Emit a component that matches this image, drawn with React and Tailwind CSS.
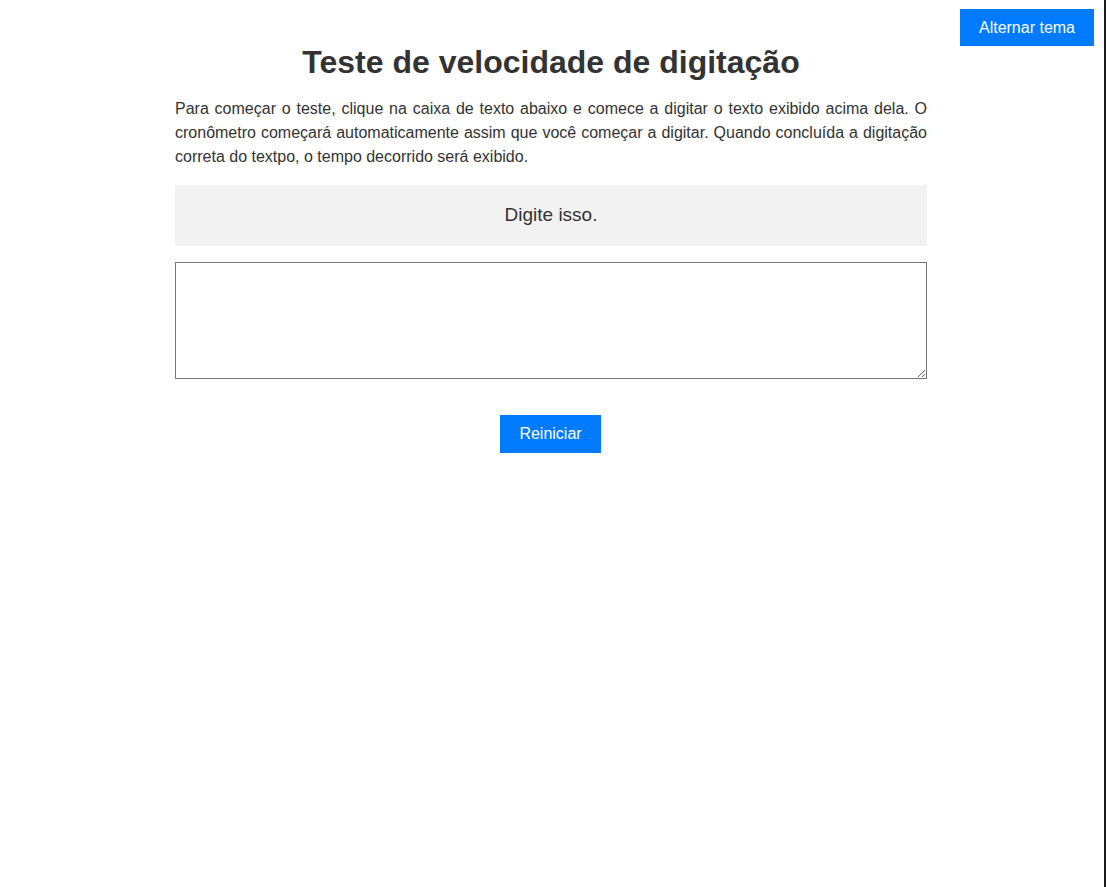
export default function App() {
  return (
    <div className="flex min-h-[887px] w-full bg-white" style={{ fontFamily: '"Liberation Sans", Arial, sans-serif' }}>
      <div className="relative flex-1 pr-[2px]">
        <button className="absolute right-[10px] top-[9px] h-[37px] w-[134px] bg-[#007bff] text-[16px] text-white">
          Alternar tema
        </button>
        <div className="mx-auto w-[752px]">
          <h1 className="mt-[44px] text-center text-[32px] font-bold leading-[37px] text-[#333]">
            Teste de velocidade de digitação
          </h1>
          <p className="mt-[16px] text-justify text-[16px] leading-[24px] text-[#333]">
            Para começar o teste, clique na caixa de texto abaixo e comece a digitar o texto exibido acima dela. O cronômetro começará automaticamente assim que você começar a digitar. Quando concluída a digitação correta do textpo, o tempo decorrido será exibido.
          </p>
          <div className="mt-[16px] flex h-[61px] items-center justify-center bg-[#f2f2f2] text-[19px] text-[#333]">
            Digite isso.
          </div>
          <textarea className="mt-[16px] block h-[117px] w-full border border-[#767676] bg-white p-2 text-[16px] outline-none" />
          <div className="mt-[36px] flex justify-start">
            <button className="ml-[325px] h-[38px] w-[101px] bg-[#007bff] text-[16px] text-white">Reiniciar</button>
          </div>
        </div>
      </div>
      <div className="w-[2px] bg-[#1a1a1a]" />
    </div>
  );
}
